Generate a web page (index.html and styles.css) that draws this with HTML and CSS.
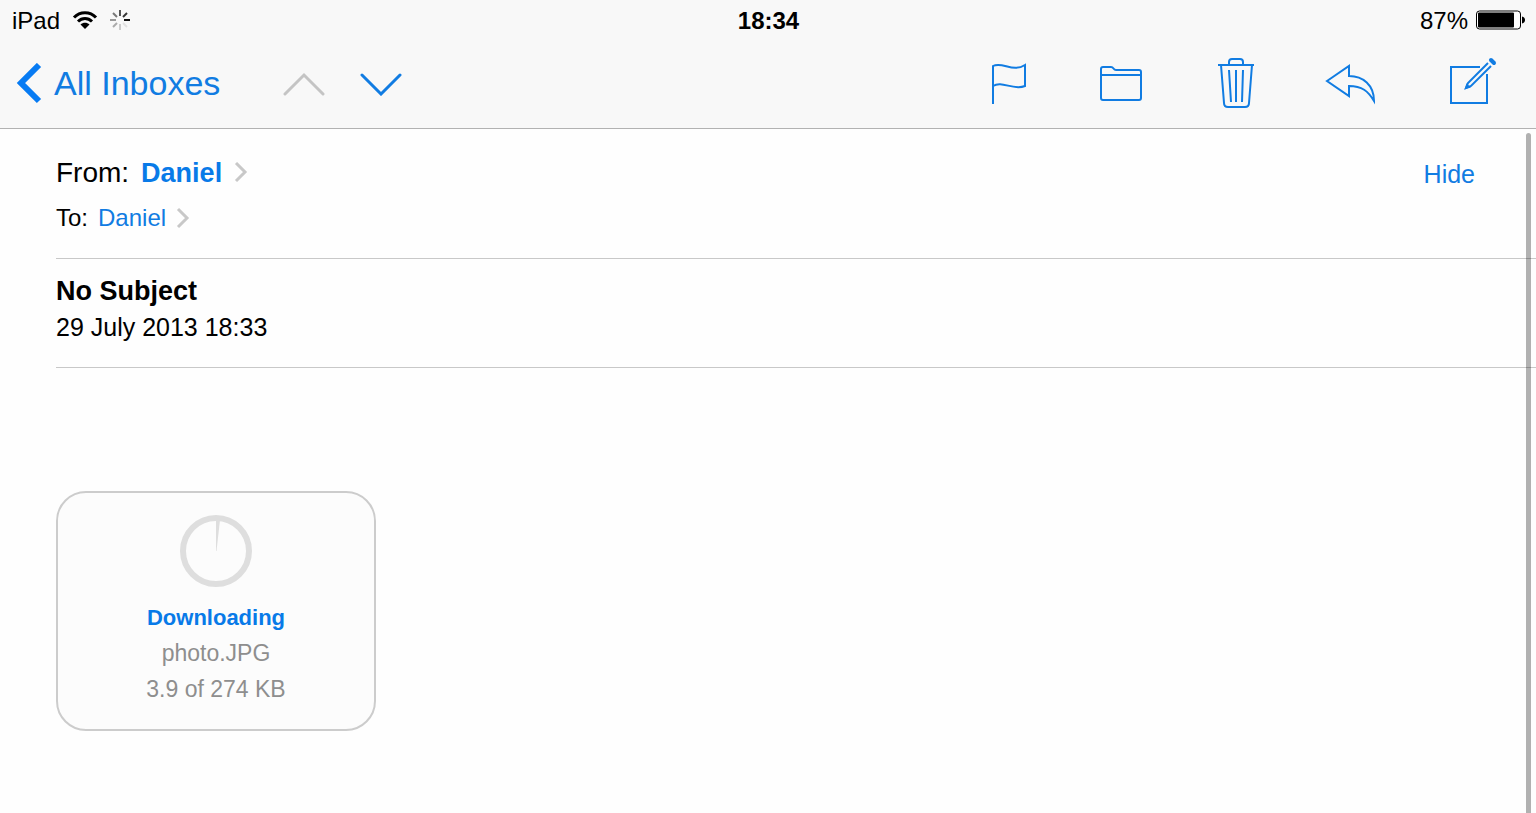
FILE: index.html
```html
<!DOCTYPE html>
<html lang="en">
<head>
    <meta charset="utf-8">
    <title>Mail</title>
    <link rel="stylesheet" href="styles.css">
</head>
<body>
    <header class="header">
        <div class="status">
            <div class="status-left">
                <span>iPad</span>
                <svg class="wifi" width="26" height="20" viewBox="0 0 26 20" fill="none" stroke="#000" stroke-width="3">
                    <path d="M2 7.500C8 1 18 1 24 7.500M6 11.500C10 7.500 16 7.500 20 11.500"/>
                    <path d="M13 19L8.500 14.500C11 12.300 15 12.300 17.500 14.500Z" fill="#000" stroke="none"/>
                </svg>
                <svg width="20" height="20" viewBox="0 0 20 20" stroke-width="2">
                    <path d="M10 0V6" stroke="#555"/>
                    <path d="M17 3L13 7" stroke="#333"/>
                    <path d="M14 10H20" stroke="#111"/>
                    <path d="M13 13L17 17" stroke="#e2e2e2"/>
                    <path d="M10 14V20" stroke="#ccc"/>
                    <path d="M7 13L3 17" stroke="#aaa"/>
                    <path d="M0 10H6" stroke="#999"/>
                    <path d="M3 3L7 7" stroke="#777"/>
                </svg>
            </div>
            <time class="clock">18:34</time>
            <div class="status-right">
                <span>87%</span>
                <svg width="49" height="20" viewBox="0 0 49 20">
                    <rect x="0.500" y="1" width="44" height="18" rx="3" fill="#fff" stroke="#000"/>
                    <rect x="2" y="2.500" width="36" height="15" rx="1"/>
                    <path d="M46 6.500C50 7 50 13 46 13.500Z"/>
                </svg>
            </div>
        </div>
        <nav class="toolbar">
            <div class="toolbar-group">
                <a class="back" href="#inboxes">
                    <svg width="26" height="42" viewBox="0 0 26 42" fill="none" stroke="#077bf3" stroke-width="6">
                        <path d="M23 2L5 20L23 38"/>
                    </svg>
                    <span>All Inboxes</span>
                </a>
                <button class="btn" aria-label="Previous message" disabled>
                    <svg class="chevron chevron-off" width="42" height="24" viewBox="0 0 42 24">
                        <path d="M2 22L21 3L40 22"/>
                    </svg>
                </button>
                <button class="btn" aria-label="Next message">
                    <svg class="chevron" width="42" height="24" viewBox="0 0 42 24">
                        <path d="M2 3L21 22L40 3"/>
                    </svg>
                </button>
            </div>
            <div class="toolbar-actions">
                <button class="btn" aria-label="Flag">
                    <svg class="icon" width="38" height="54" viewBox="0 0 38 54">
                        <path d="M2 47V9C11 4 22 16 34 8V29C22 34 11 23 2 29"/>
                    </svg>
                </button>
                <button class="btn" aria-label="Move">
                    <svg class="icon" width="48" height="54" viewBox="0 0 48 54">
                        <path d="M2 41V12Q2 10 4 10H12C15 10 14 13 17 13H40Q42 13 42 15V41Q42 43 40 43H4Q2 43 2 41ZM2 18H42"/>
                    </svg>
                </button>
                <button class="btn" aria-label="Delete">
                    <svg class="icon" width="38" height="54" viewBox="0 0 38 54">
                        <path d="M1 8H37M12 8V5Q12 2 15 2H23Q26 2 26 5V8M4 8L7 46Q7 50 11 50H28Q32 50 32 46L35 8M12 13L14 45M19 13V45M26 13L25 45"/>
                    </svg>
                </button>
                <button class="btn" aria-label="Reply">
                    <svg class="icon" width="53" height="54" viewBox="0 0 53 54">
                        <path d="M2 24L24 9V19C38 19 49 28 49 44C43 34 37 29 24 29V39Z"/>
                    </svg>
                </button>
                <button class="btn" aria-label="Compose">
                    <svg class="icon" width="50" height="54" viewBox="0 0 50 54">
                        <path d="M32 10H3V46H39V17"/>
                        <path d="M40 6L20 26L18 31L23 29L43 9"/>
                        <path d="M18 31L19 28L21 30Z" class="icon-solid"/>
                        <path d="M43 3L46 6" stroke-linecap="round" class="eraser"/>
                    </svg>
                </button>
            </div>
        </nav>
    </header>

    <main class="message">
        <section class="people">
            <div>
                <div class="from">
                    <span>From:</span>
                    <a href="#sender">Daniel</a>
                    <svg class="arrow" width="14" height="22" viewBox="0 0 14 22"><path d="M2 1L11 10L2 19"/></svg>
                </div>
                <div class="to">
                    <span>To:</span>
                    <a href="#recipient">Daniel</a>
                    <svg class="arrow" width="14" height="22" viewBox="0 0 14 22"><path d="M2 2L11 11L2 20"/></svg>
                </div>
            </div>
            <button class="btn hide">Hide</button>
        </section>
        <section class="subject">
            <h1>No Subject</h1>
            <time>29 July 2013 18:33</time>
        </section>
        <section class="attachment">
            <svg class="progress" width="72" height="72" viewBox="0 0 72 72">
                <circle cx="36" cy="36" r="33" fill="none" stroke="#dedede" stroke-width="6"/>
                <path d="M36 5H40L36.500 36H36Z" fill="#dedede"/>
            </svg>
            <strong>Downloading</strong>
            <span>photo.JPG</span>
            <span>3.9 of 274 KB</span>
        </section>
        <div class="scrollbar"></div>
    </main>
</body>
</html>
```

FILE: styles.css
```css
:root {
    --blue: #117ce2;
    --line: 1px solid #c8c8c8;
}

* {
    box-sizing: border-box;
}

body {
    margin: 0;
    min-height: 100vh;
    display: flex;
    flex-direction: column;
    font-family: "Liberation Sans", Arial, sans-serif;
    color: #000;
    background: #fefefe;
}

a {
    color: var(--blue);
    text-decoration: none;
}

svg {
    display: block;
    flex-shrink: 0;
}

.btn {
    background: none;
    border: none;
    padding: 0;
    cursor: pointer;
    font-family: inherit;
    color: var(--blue);
}

.icon {
    fill: none;
    stroke: var(--blue);
    stroke-width: 2;
}

.icon-solid {
    fill: var(--blue);
}

.eraser {
    stroke-width: 4;
}

.chevron {
    fill: none;
    stroke: var(--blue);
    stroke-width: 3;
    stroke-linecap: round;
}

.chevron-off {
    stroke: #c4c4c4;
}

.header {
    background: #f8f8f8;
    border-bottom: 1px solid #b2b2b2;
}

.status {
    height: 40px;
    padding: 0 11px 0 12px;
    display: grid;
    grid-template-columns: 1fr auto 1fr;
    align-items: center;
    font-size: 24px;
    line-height: 40px;
}

.status-left,
.status-right {
    display: flex;
    align-items: center;
}

.status-left {
    gap: 12px;
}

.status-right {
    gap: 8px;
    justify-content: flex-end;
}

.status span,
.clock {
    padding-top: 2px;
    line-height: 38px;
}

.clock {
    font-weight: bold;
}

.toolbar {
    height: 88px;
    padding: 0 38px 0 16px;
    display: flex;
    align-items: center;
    justify-content: space-between;
}

.toolbar-group {
    display: flex;
    align-items: center;
    gap: 35px;
}

.back {
    display: flex;
    align-items: center;
    gap: 12px;
    margin-right: 28px;
    font-size: 34px;
    line-height: 40px;
}

.back span {
    padding-bottom: 2px;
}

.toolbar-actions {
    display: flex;
    gap: 70px;
}

.message {
    position: relative;
    flex: 1;
    padding-left: 56px;
}

.people {
    height: 130px;
    padding: 24px 61px 0 0;
    display: flex;
    align-items: flex-start;
    justify-content: space-between;
    border-bottom: var(--line);
}

.from,
.to {
    display: flex;
    align-items: center;
    line-height: 40px;
}

.from {
    gap: 12px;
    font-size: 28px;
}

.from a {
    font-size: 27px;
    font-weight: bold;
    color: #087ae8;
}

.to {
    gap: 10px;
    margin-top: 5px;
    font-size: 24px;
}

.arrow {
    fill: none;
    stroke: #c8c8c8;
    stroke-width: 3;
}

.hide {
    font-size: 25px;
    line-height: 42px;
}

.subject {
    height: 109px;
    padding-top: 14px;
    border-bottom: var(--line);
}

.subject h1 {
    margin: 0;
    font-size: 27px;
    line-height: 36px;
}

.subject time {
    display: block;
    font-size: 25px;
    line-height: 36px;
}

.attachment {
    width: 320px;
    height: 240px;
    margin: 123px 0 40px;
    padding-top: 22px;
    display: flex;
    flex-direction: column;
    align-items: center;
    border: 2px solid #ccc;
    border-radius: 30px;
    background: #fcfcfc;
    color: #8e8e8e;
    font-size: 23px;
    line-height: 36px;
}

.attachment strong {
    margin-top: 14px;
    font-size: 22px;
    line-height: 34px;
    color: #087ae8;
}

.scrollbar {
    position: absolute;
    top: 4px;
    right: 5px;
    bottom: 0;
    width: 5px;
    border-radius: 3px 3px 0 0;
    background: rgba(0, 0, 0, 0.3);
}
```
